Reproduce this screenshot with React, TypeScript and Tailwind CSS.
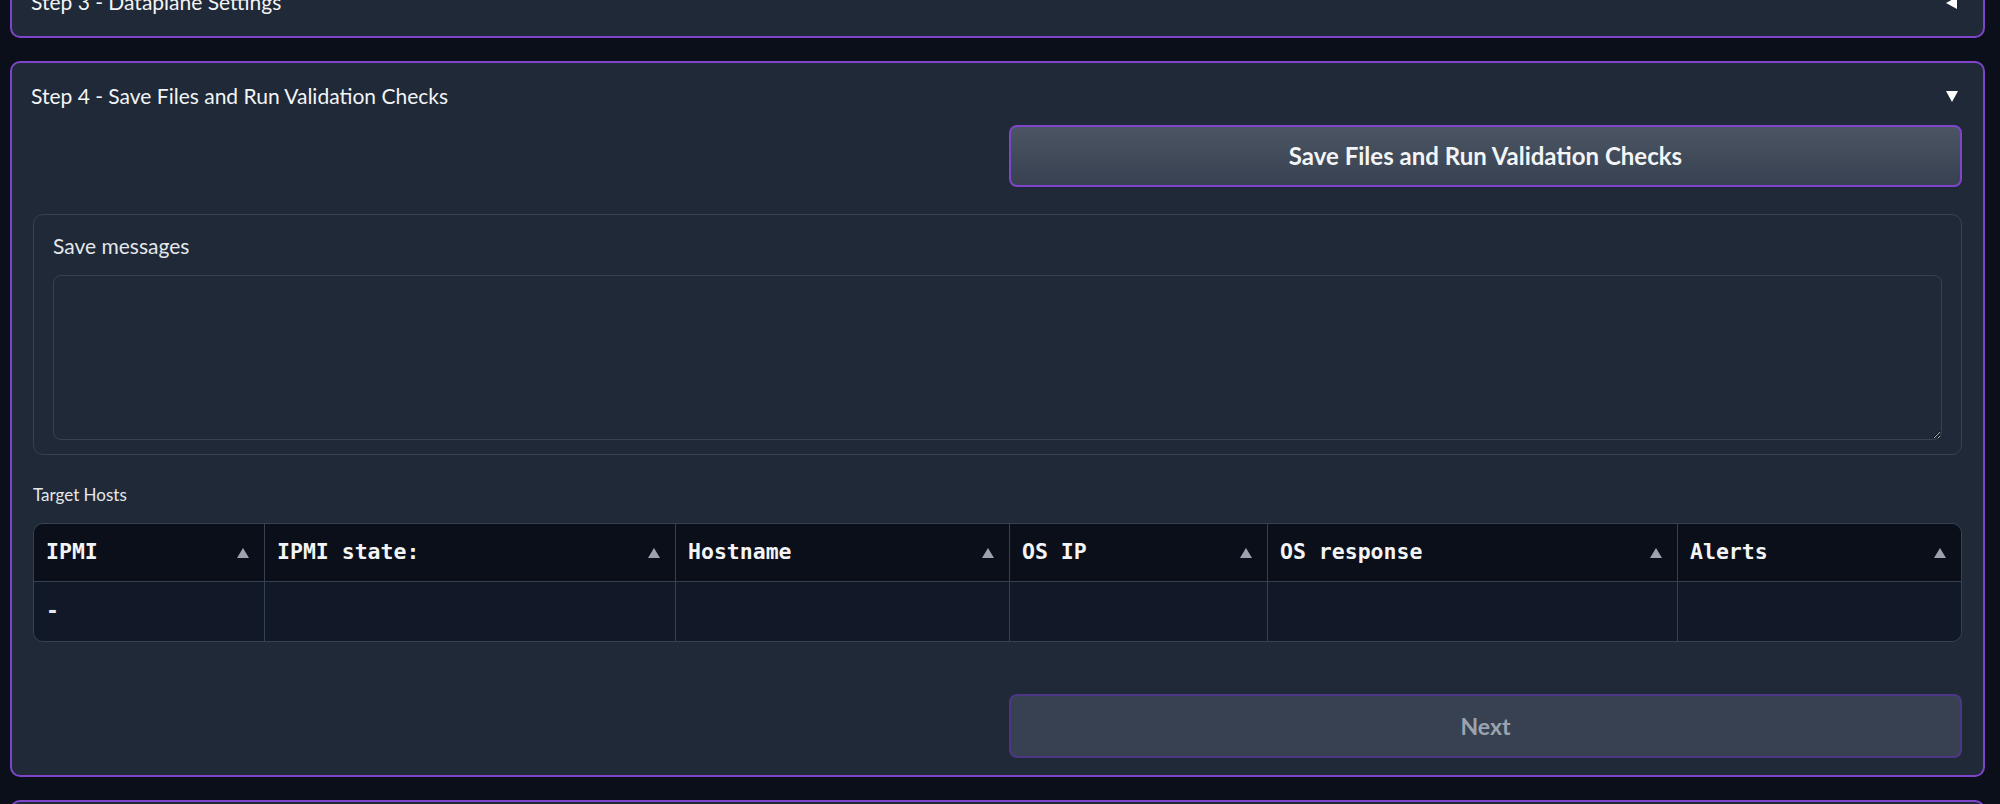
const sans = { fontFamily: 'Lato, "Open Sans", sans-serif' }
const mono = { fontFamily: '"DejaVu Sans Mono", "Liberation Mono", monospace' }

const columns = [
  { name: 'IPMI', w: 'w-[231px]' },
  { name: 'IPMI state:', w: 'w-[411px]' },
  { name: 'Hostname', w: 'w-[334px]' },
  { name: 'OS IP', w: 'w-[258px]' },
  { name: 'OS response', w: 'w-[410px]' },
  { name: 'Alerts', w: 'flex-1' },
]

function SortArrow() {
  return (
    <svg width="12" height="10" viewBox="0 0 12 10" className="shrink-0">
      <polygon points="6,0 12,10 0,10" fill="#9ca3af" />
    </svg>
  )
}

function Caret({ dir }: { dir: 'down' | 'left' }) {
  return (
    <svg width="14" height="14" viewBox="0 0 14 14">
      {dir === 'down' ? (
        <polygon points="1,2 13,2 7,13" fill="#ffffff" />
      ) : (
        <polygon points="12,1 12,13 1,7" fill="#ffffff" />
      )}
    </svg>
  )
}

export default function App() {
  return (
    <div className="w-[2000px] h-[804px] overflow-hidden bg-[#0b0f19] pl-[10px] pr-[15px]" style={sans}>
      {/* collapsed step 3 */}
      <div className="-mt-[32px] h-[70px] rounded-[10px] border-2 border-[#7e44c9] bg-[#1f2937] flex items-center justify-between pl-[19px] pr-[24px]">
        <span className="text-[21px] text-[#f3f4f6] leading-[24px] translate-y-[-1px]">Step 3 - Dataplane Settings</span>
        <Caret dir="left" />
      </div>

      {/* step 4 */}
      <div className="mt-[23px] h-[716px] rounded-[10px] border-2 border-[#7e44c9] bg-[#1f2937] px-[21px] pt-[21px]">
        <div className="flex items-center justify-between h-[24px] pr-[3px]">
          <span className="text-[21px] text-[#f3f4f6] -ml-[2px]">Step 4 - Save Files and Run Validation Checks</span>
          <Caret dir="down" />
        </div>

        <div className="mt-[17px] grid grid-cols-2 gap-[23px]">
          <div />
          <button className="h-[62px] rounded-[8px] border-2 border-[#7e44c9] bg-gradient-to-b from-[#4b5563] to-[#374151] text-[#f3f4f6] text-[24px] font-bold">
            Save Files and Run Validation Checks
          </button>
        </div>

        <div className="mt-[27px] h-[241px] rounded-[10px] border border-[#374151] px-[19px] pt-[17px]">
          <div className="text-[21px] text-[#e5e7eb] leading-[28px]">Save messages</div>
          <textarea className="mt-[15px] block w-full h-[165px] rounded-[8px] border border-[#374151] bg-[#1f2937] resize-y outline-none" />
        </div>

        <div className="mt-[30px] text-[17px] text-[#e5e7eb] leading-[20px]">Target Hosts</div>

        <div className="mt-[18px] rounded-[10px] border border-[#374151] overflow-hidden" style={mono}>
          <div className="flex h-[58px] bg-[#0b0f19] border-b border-[#374151]">
            {columns.map((c, i) => (
              <div
                key={c.name}
                className={`${c.w} flex items-center justify-between pl-[12px] pr-[15px] ${i < columns.length - 1 ? 'border-r border-[#374151]' : ''}`}
              >
                <span className="text-[21.5px] font-bold text-[#f3f4f6]">{c.name}</span>
                <SortArrow />
              </div>
            ))}
          </div>
          <div className="flex h-[59px] bg-[#111827]">
            {columns.map((c, i) => (
              <div
                key={c.name}
                className={`${c.w} flex items-center pl-[12px] ${i < columns.length - 1 ? 'border-r border-[#374151]' : ''}`}
              >
                <span className="text-[21.5px] font-bold text-[#e5e7eb]">{i === 0 ? '-' : ''}</span>
              </div>
            ))}
          </div>
        </div>

        <div className="mt-[52px] grid grid-cols-2 gap-[23px]">
          <div />
          <button className="h-[64px] rounded-[8px] border-2 border-[#4f3585] bg-[#374151] text-[#9ca3af] text-[23px] font-bold">
            Next
          </button>
        </div>
      </div>

      {/* next step, cut off */}
      <div className="mt-[23px] h-[60px] rounded-[10px] border-2 border-[#7e44c9] bg-[#1f2937]" />
    </div>
  )
}
